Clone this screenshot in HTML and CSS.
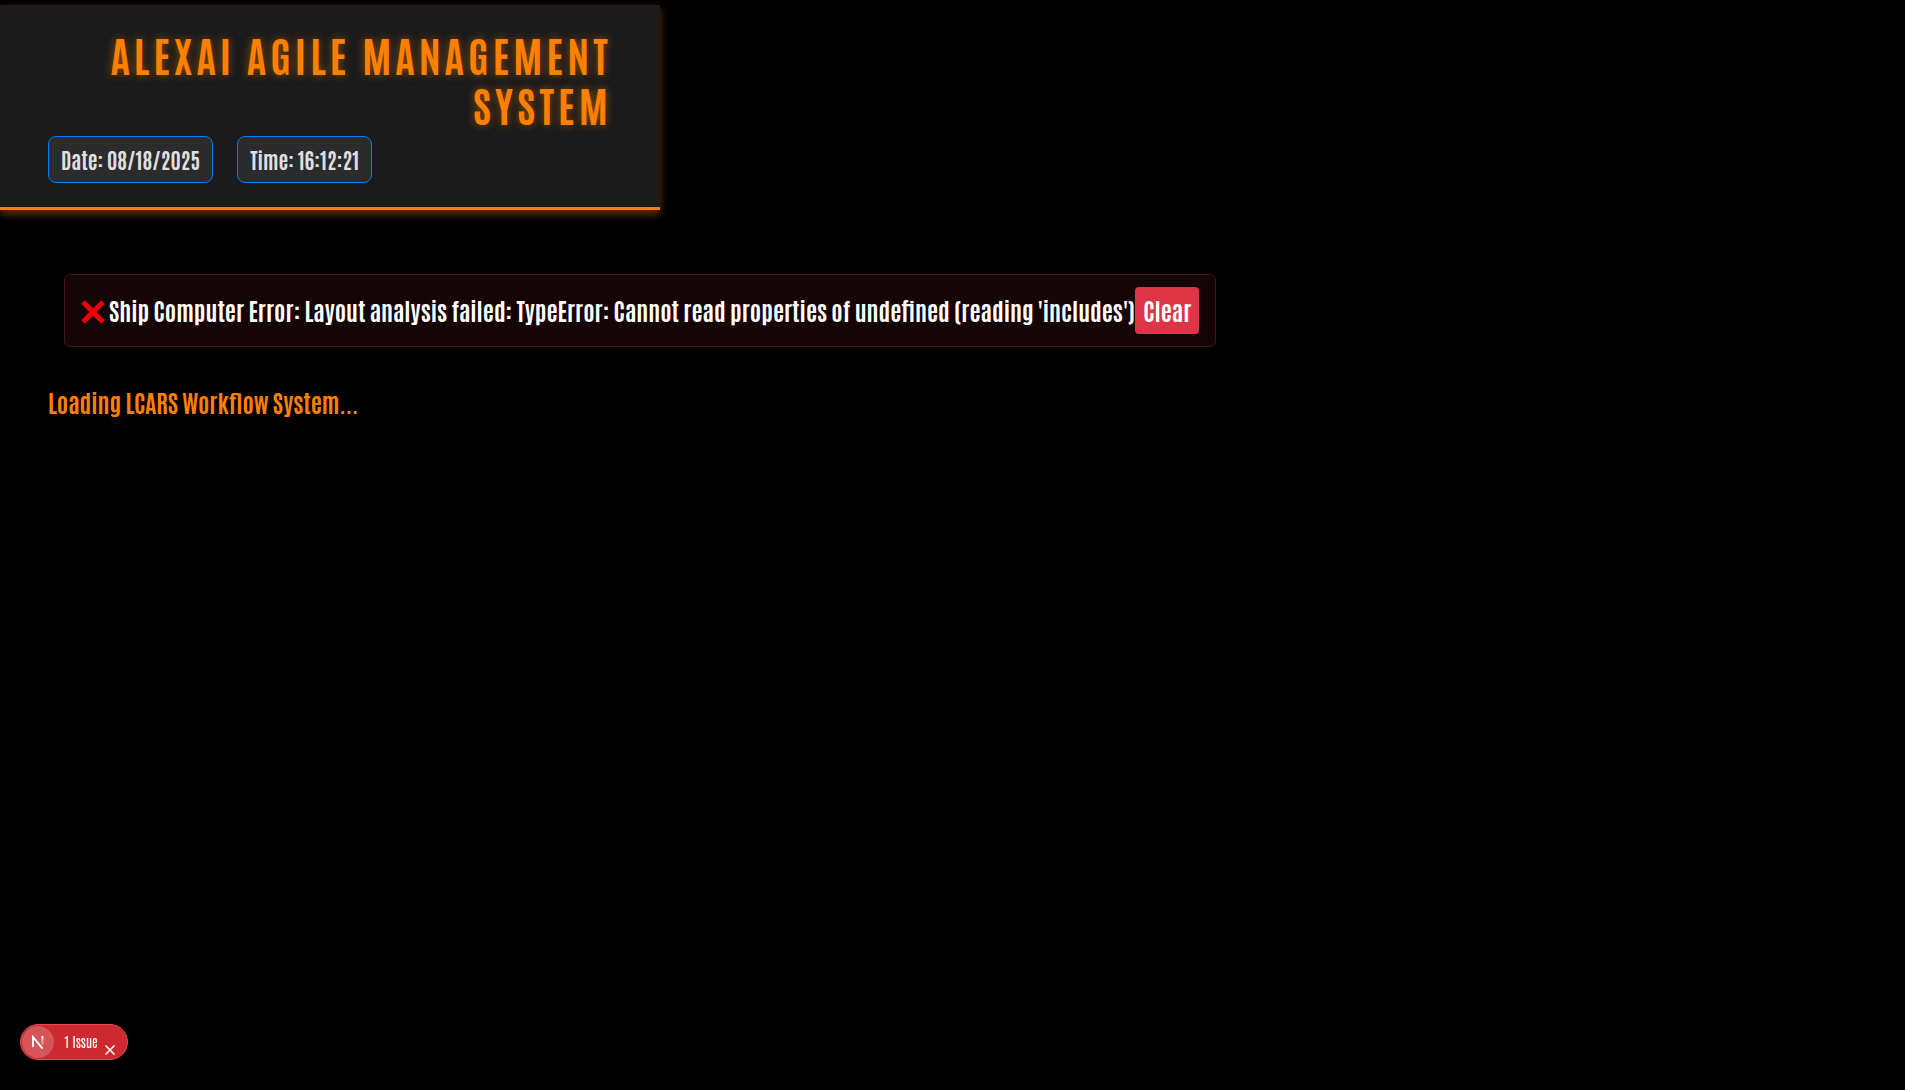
FILE: index.html
```html
<!DOCTYPE html>
<html lang="en">
<head>
<meta charset="utf-8">
<title>AlexAI Agile Management System</title>
<link rel="stylesheet" href="styles.css">
</head>
<body>
<header class="header">
  <h1 class="title">ALEXAI AGILE MANAGEMENT SYSTEM</h1>
  <div class="clock">
    <span class="pill">Date: 08/18/2025</span>
    <span class="pill">Time: 16:12:21</span>
  </div>
</header>
<main class="content">
  <div class="alert" role="alert">
    <svg class="alert-icon" viewBox="0 0 24 24" aria-hidden="true"><path d="M2 3 22 23M22 3 2 23" stroke="#f30000" stroke-width="5"/></svg>
    <span class="alert-text">Ship Computer Error: Layout analysis failed: TypeError: Cannot read properties of undefined (reading 'includes')</span>
    <button class="clear" type="button">Clear</button>
  </div>
  <p class="loading">Loading LCARS Workflow System...</p>
</main>
<aside class="issues">
  <button class="logo" type="button" aria-label="Open developer tools">
    <svg width="14" height="14" viewBox="0 0 14 14" fill="none" aria-hidden="true">
      <defs><linearGradient id="fade" x1="0" y1="0" x2="0" y2="1"><stop offset="0" stop-color="#fff"/><stop offset="1" stop-color="#fff" stop-opacity=".2"/></linearGradient></defs>
      <path d="M2 12V2L11.500 13.500" stroke="#fff" stroke-width="1.900"/>
      <rect x="10.500" y="1" width="1.900" height="9" fill="url(#fade)"/>
    </svg>
  </button>
  <button class="issue-count" type="button">1 Issue</button>
  <button class="dismiss" type="button" aria-label="Dismiss">
    <svg width="10" height="10" viewBox="0 0 10 10" aria-hidden="true"><path d="M.5.5 9.500 9.500M9.500.5.5 9.500" stroke="#fff" stroke-width="1.500"/></svg>
  </button>
</aside>
</body>
</html>
```
FILE: styles.css
```css
* { box-sizing: border-box; }

body {
  margin: 0;
  padding-top: 5px;
  min-height: 100vh;
  background: #000;
  color: #fff;
  font-family: Antonio, "Liberation Sans Narrow", "Liberation Sans", sans-serif;
  font-size: 24px;
}

button {
  border: 0;
  padding: 0;
  color: inherit;
  background: none;
  font: inherit;
  cursor: pointer;
}

.header {
  width: 660px;
  max-width: 100%;
  padding: 24px 48px;
  background: #1b1b1b;
  border-bottom: 3px solid #ff8000;
  box-shadow: 0 4px 8px rgba(255, 128, 0, .4);
}

.title {
  margin: 0 0 7px;
  color: #ff8000;
  font-size: 42px;
  line-height: 50px;
  font-weight: 700;
  letter-spacing: .1em;
  text-align: right;
  text-shadow: 0 0 8px rgba(255, 128, 0, .5);
}

.clock {
  display: flex;
  gap: 24px;
}

.pill {
  padding: 7px 12px;
  border: 1px solid #0080ff;
  border-radius: 8px;
  background: #2b2b2b;
  color: #e0e0e0;
  font-size: 21px;
  line-height: 31px;
  font-weight: 700;
  white-space: nowrap;
}

.content { padding: 64px 48px; }

.alert {
  display: flex;
  align-items: center;
  width: fit-content;
  margin: 0 16px 32px;
  padding: 12px 16px;
  border: 1px solid #48141a;
  border-radius: 6px;
  background: #160507;
  font-weight: 700;
}

.alert-icon {
  flex: none;
  width: 24px;
  height: 24px;
  margin-right: 4px;
}

.alert-text {
  padding-bottom: 2px;
  line-height: 45px;
}

.clear {
  padding: 0 8px 2px;
  border-radius: 4px;
  background: #dc3545;
  line-height: 45px;
}

.loading {
  margin: 0;
  color: #ff8000;
  line-height: 46px;
  font-weight: 700;
}

.issues {
  position: fixed;
  left: 20px;
  bottom: 30px;
  display: flex;
  align-items: center;
  width: 108px;
  height: 36px;
  padding: 1px;
  border: 1px solid #e5484d;
  border-radius: 18px;
  background: #ca2a30;
}

.logo {
  display: flex;
  align-items: center;
  justify-content: center;
  width: 32px;
  height: 32px;
  border-radius: 50%;
  background: #d6545a;
}

.issue-count {
  margin-left: 10px;
  font-size: 13px;
  line-height: 18px;
  white-space: nowrap;
}

.dismiss {
  display: flex;
  align-self: flex-end;
  margin: 0 11px 3px auto;
}
```
